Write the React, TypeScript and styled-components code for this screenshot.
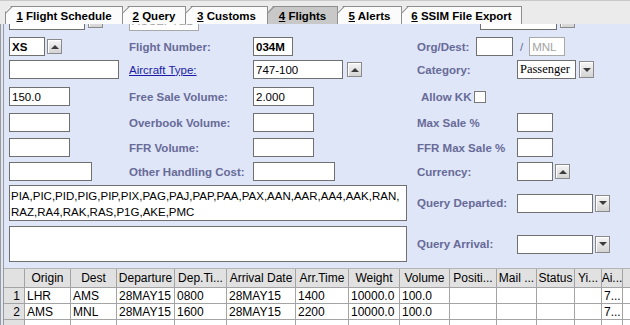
import React from 'react';
import styled, { createGlobalStyle } from 'styled-components';

const GlobalStyle = createGlobalStyle`
  html, body { margin: 0; padding: 0; background: #dee6f7; }
  body {
    width: 630px; height: 325px; overflow: hidden;
    font-family: "Liberation Sans", Arial, sans-serif; font-size: 12px; color: #000;
  }
  * { box-sizing: border-box; }
`;

const Window = styled.div`
  width: 630px;
  height: 325px;
  display: flex;
  flex-direction: column;
  overflow: hidden;
  background: #dee6f7;
`;

const TabStrip = styled.div`
  flex: none;
  height: 24px;
  display: flex;
  align-items: flex-end;
  padding-left: 5px;
  background: #ebebeb;
  border-top: 1px solid #c9c9c9;
`;

const Tab = styled.div<{ $selected?: boolean; $w: number }>`
  position: relative;
  flex: none;
  width: ${p => p.$w}px;
  height: 18px;
  display: flex;
  align-items: center;
  justify-content: center;
  border: 1px solid #8e8e8e;
  border-bottom: none;
  margin-right: -1px;
  background: ${p => (p.$selected ? '#c8c8c8' : '#fbfbfb')};
  clip-path: polygon(6px 0, 100% 0, 100% 100%, 0 100%, 0 6px);
  &::before {
    content: '';
    position: absolute;
    left: -1px;
    top: 5.8px;
    width: 10px;
    height: 1px;
    background: #8e8e8e;
    transform-origin: 0 0;
    transform: rotate(-45deg);
  }
`;

const TabText = styled.span`
  display: block;
  font-weight: bold;
  font-size: 11.5px;
  white-space: pre;
  &::first-letter {
    text-decoration: underline;
  }
`;

const Body = styled.div`
  flex: 1;
  min-height: 0;
  display: flex;
  flex-direction: column;
  border-left: 4px double #9a9a9a;
`;

const FormPane = styled.div`
  flex: none;
  height: 244px;
  overflow: hidden;
  background: #dee6f7;
  padding-left: 5px;
`;

const Scroller = styled.div`
  margin-top: -14px;
`;

const Row = styled.div<{ $gap: number; $h?: number }>`
  display: grid;
  grid-template-columns: 120px 124px 164px 100px 1fr;
  height: ${p => p.$h ?? 19}px;
  margin-top: ${p => p.$gap}px;
  align-items: center;
`;

const Cell = styled.div<{ $span?: number; $pl?: number }>`
  display: flex;
  align-items: center;
  height: 100%;
  grid-column: span ${p => p.$span ?? 1};
  padding-left: ${p => p.$pl ?? 0}px;
`;

const Label = styled.span<{ $w?: number; $pl?: number }>`
  font-size: 11.5px;
  font-weight: bold;
  color: #686a98;
  white-space: nowrap;
  flex: none;
  ${p => (p.$w ? `width: ${p.$w}px;` : '')}
  padding-left: ${p => p.$pl ?? 0}px;
`;

const LinkLabel = styled.span`
  font-size: 11.5px;
  color: #1c1ca6;
  text-decoration: underline;
  white-space: nowrap;
`;

const Field = styled.div<{ $w: number; $h?: number; $bold?: boolean; $disabled?: boolean; $serif?: boolean }>`
  flex: none;
  width: ${p => p.$w}px;
  height: ${p => p.$h ?? 19}px;
  display: flex;
  align-items: center;
  padding: 0 2px;
  background: #fff;
  border: 1px solid ${p => (p.$disabled ? '#a9a9a9' : '#707070')};
  color: ${p => (p.$disabled ? '#a3a3a3' : '#000')};
  font-family: ${p => (p.$serif ? '"Liberation Serif", "Times New Roman", serif' : '"Liberation Sans", Arial, sans-serif')};
  font-size: ${p => (p.$serif ? '12.5px' : '11.5px')};
  font-weight: ${p => (p.$bold ? 'bold' : 'normal')};
  white-space: nowrap;
  overflow: hidden;
`;

const ArrowBtn = styled.span<{ $down?: boolean; $h?: number; $ml?: number }>`
  flex: none;
  width: 15px;
  height: ${p => p.$h ?? 15}px;
  margin-left: ${p => p.$ml ?? 2}px;
  border: 1px solid #8a8a8a;
  background: linear-gradient(#f6f6f6, #d3d3d3);
  box-shadow: inset 1px 1px 0 #fff;
  display: flex;
  align-items: center;
  justify-content: center;
  &::after {
    content: '';
    width: 0;
    height: 0;
    border-left: 4px solid transparent;
    border-right: 4px solid transparent;
    ${p => (p.$down ? 'border-top: 4px solid #3c3c3c;' : 'border-bottom: 4px solid #3c3c3c;')}
  }
`;

const CheckBox = styled.span`
  flex: none;
  width: 12px;
  height: 12px;
  margin-left: 3px;
  background: #fff;
  border: 1px solid #7a7a7a;
`;

const Slash = styled.span`
  color: #686a98;
  font-size: 11.5px;
  margin: 0 6px 0 7px;
`;

const TextBox = styled.div<{ $w: number }>`
  grid-column: span 3;
  width: ${p => p.$w}px;
  height: 100%;
  background: #fff;
  border: 1px solid #707070;
  padding: 2px 1px;
  font-size: 11.5px;
  line-height: 16px;
  white-space: pre;
  overflow: hidden;
`;

const TablePane = styled.div`
  flex: 1;
  min-height: 0;
  overflow: hidden;
  background: #fff;
`;

const COLS = '21px 46px 46px 58px 52px 69px 53px 51px 50px 47px 40px 38px 27px 21px 30px';

const GridRow = styled.div<{ $head?: boolean }>`
  display: grid;
  grid-template-columns: ${COLS};
  width: 649px;
  height: ${p => (p.$head ? 20 : 16)}px;
  ${p => (p.$head ? 'border-top: 1px solid #b4b4b4;' : '')}
`;

const HeadCell = styled.div`
  background: #e1e1e1;
  border-right: 1px solid #a4a4a4;
  border-bottom: 1px solid #a4a4a4;
  display: flex;
  align-items: center;
  justify-content: center;
  font-size: 12px;
  white-space: nowrap;
  overflow: hidden;
`;

const NumCell = styled.div`
  background: #e1e1e1;
  border-right: 1px solid #a4a4a4;
  border-bottom: 1px solid #a4a4a4;
  display: flex;
  align-items: center;
  justify-content: flex-end;
  padding-right: 4px;
  font-size: 12px;
`;

const DataCell = styled.div`
  border-right: 1px solid #a4a4a4;
  border-bottom: 1px solid #a4a4a4;
  display: flex;
  align-items: center;
  padding-left: 2px;
  font-size: 12px;
  white-space: nowrap;
  overflow: hidden;
`;

const tabs = [
  { text: '1 Flight Schedule', w: 118 },
  { text: '2 Query', w: 64 },
  { text: '3 Customs', w: 83 },
  { text: '4 Flights', w: 71, selected: true },
  { text: '5 Alerts', w: 65 },
  { text: '6 SSIM File Export', w: 121 },
];

const headers = ['', 'Origin', 'Dest', 'Departure', 'Dep.Ti...', 'Arrival Date', 'Arr.Time', 'Weight', 'Volume', 'Positi...', 'Mail ...', 'Status', 'Yi...', 'Ai...', 'F'];

const rows = [
  ['1', 'LHR', 'AMS', '28MAY15', '0800', '28MAY15', '1400', '10000.0', '100.0', '', '', '', '', '7...', ''],
  ['2', 'AMS', 'MNL', '28MAY15', '1600', '28MAY15', '2200', '10000.0', '100.0', '', '', '', '', '7...', ''],
  ['', '', '', '', '', '', '', '', '', '', '', '', '', '', ''],
];

const codes =
  'PIA,PIC,PID,PIG,PIP,PIX,PAG,PAJ,PAP,PAA,PAX,AAN,AAR,AA4,AAK,RAN,\nRAZ,RA4,RAK,RAS,P1G,AKE,PMC';

export default function App() {
  return (
    <>
      <GlobalStyle />
      <Window>
        <TabStrip>
          {tabs.map(t => (
            <Tab key={t.text} $w={t.w} $selected={t.selected}>
              <TabText>{t.text}</TabText>
            </Tab>
          ))}
        </TabStrip>
        <Body>
          <FormPane>
            <Scroller>
              <Row $gap={0}>
                <Cell>
                  <Field $w={76} />
                  <ArrowBtn $ml={3} />
                </Cell>
                <Cell>
                  <Field $w={70} $h={21} $disabled>ACCEPTED</Field>
                </Cell>
                <Cell />
                <Cell $span={2} $pl={63}>
                  <Field $w={77} />
                  <ArrowBtn $ml={3} />
                </Cell>
              </Row>

              <Row $gap={8}>
                <Cell>
                  <Field $w={36} $bold>XS</Field>
                  <ArrowBtn />
                </Cell>
                <Cell><Label>Flight Number:</Label></Cell>
                <Cell><Field $w={40} $bold>034M</Field></Cell>
                <Cell $span={2}>
                  <Label $w={59}>Org/Dest:</Label>
                  <Field $w={37} />
                  <Slash>/</Slash>
                  <Field $w={36} $disabled>MNL</Field>
                </Cell>
              </Row>

              <Row $gap={4}>
                <Cell><Field $w={110} /></Cell>
                <Cell><LinkLabel>Aircraft Type:</LinkLabel></Cell>
                <Cell>
                  <Field $w={90}>747-100</Field>
                  <ArrowBtn $ml={4} />
                </Cell>
                <Cell><Label>Category:</Label></Cell>
                <Cell>
                  <Field $w={59} $serif>Passenger</Field>
                  <ArrowBtn $down $ml={3} $h={17} />
                </Cell>
              </Row>

              <Row $gap={8}>
                <Cell><Field $w={61}>150.0</Field></Cell>
                <Cell><Label>Free Sale Volume:</Label></Cell>
                <Cell><Field $w={61}>2.000</Field></Cell>
                <Cell $span={2}>
                  <Label $pl={4}>Allow KK</Label>
                  <CheckBox />
                </Cell>
              </Row>

              <Row $gap={7}>
                <Cell><Field $w={61} /></Cell>
                <Cell><Label>Overbook Volume:</Label></Cell>
                <Cell><Field $w={61} /></Cell>
                <Cell><Label>Max Sale %</Label></Cell>
                <Cell><Field $w={36} /></Cell>
              </Row>

              <Row $gap={6}>
                <Cell><Field $w={61} /></Cell>
                <Cell><Label>FFR Volume:</Label></Cell>
                <Cell><Field $w={61} /></Cell>
                <Cell><Label>FFR Max Sale %</Label></Cell>
                <Cell><Field $w={36} /></Cell>
              </Row>

              <Row $gap={5}>
                <Cell><Field $w={83} /></Cell>
                <Cell><Label>Other Handling Cost:</Label></Cell>
                <Cell><Field $w={82} /></Cell>
                <Cell><Label>Currency:</Label></Cell>
                <Cell>
                  <Field $w={36} />
                  <ArrowBtn />
                </Cell>
              </Row>

              <Row $gap={4} $h={36}>
                <TextBox $w={398}>{codes}</TextBox>
                <Cell><Label>Query Departed:</Label></Cell>
                <Cell>
                  <Field $w={76} />
                  <ArrowBtn $down $h={17} />
                </Cell>
              </Row>

              <Row $gap={5} $h={36}>
                <TextBox $w={398} />
                <Cell><Label>Query Arrival:</Label></Cell>
                <Cell>
                  <Field $w={76} />
                  <ArrowBtn $down $h={17} />
                </Cell>
              </Row>
            </Scroller>
          </FormPane>

          <TablePane>
            <GridRow $head>
              {headers.map((h, i) => (
                <HeadCell key={i}>{h}</HeadCell>
              ))}
            </GridRow>
            {rows.map((r, ri) => (
              <GridRow key={ri}>
                {r.map((v, ci) =>
                  ci === 0 ? <NumCell key={ci}>{v}</NumCell> : <DataCell key={ci}>{v}</DataCell>
                )}
              </GridRow>
            ))}
          </TablePane>
        </Body>
      </Window>
    </>
  );
}
